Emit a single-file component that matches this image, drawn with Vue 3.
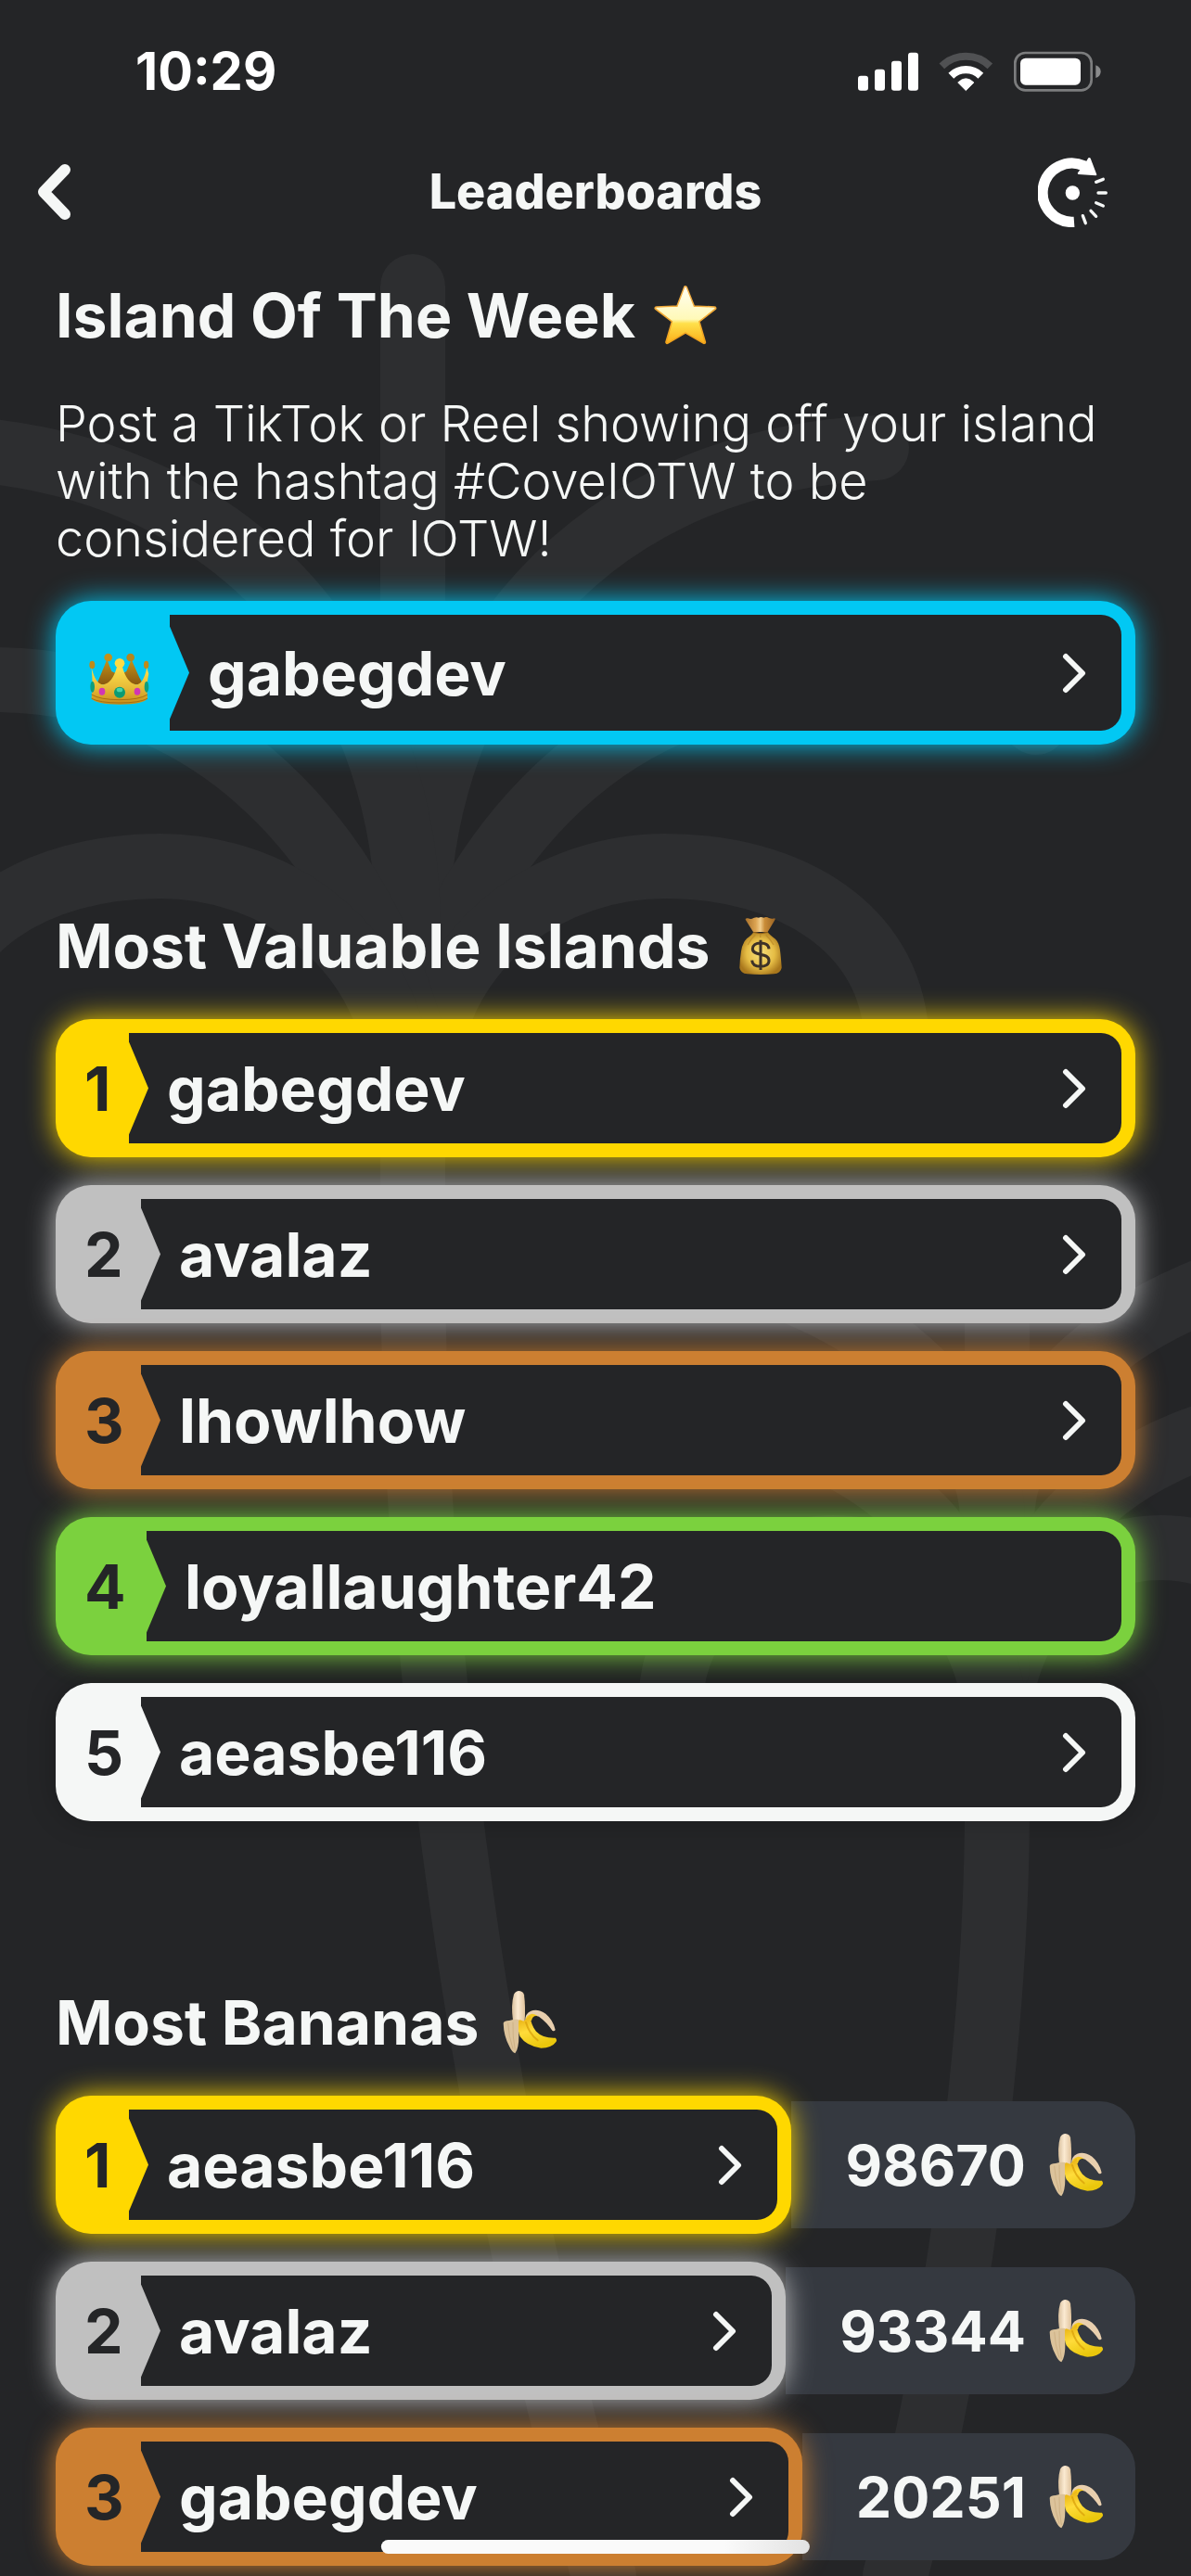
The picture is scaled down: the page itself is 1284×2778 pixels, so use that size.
<script setup>
const islandOfTheWeek = { rank: 'crown', name: 'gabegdev', tone: 'cyan', link: true }

const valuable = [
  { rank: 1, name: 'gabegdev', tone: 'gold', link: true },
  { rank: 2, name: 'avalaz', tone: 'silver', link: true },
  { rank: 3, name: 'lhowlhow', tone: 'bronze', link: true },
  { rank: 4, name: 'loyallaughter42', tone: 'green', link: false },
  { rank: 5, name: 'aeasbe116', tone: 'white', link: true },
]

const bananas = [
  { rank: 1, name: 'aeasbe116', tone: 'gold', link: true, score: 98670 },
  { rank: 2, name: 'avalaz', tone: 'silver', link: true, score: 93344 },
  { rank: 3, name: 'gabegdev', tone: 'bronze', link: true, score: 20251 },
]

const sections = [
  { id: 'iotw', title: 'Island Of The Week', icon: 'star', label: 'star', rows: [islandOfTheWeek],
    note: 'Post a TikTok or Reel showing off your island with the hashtag #CoveIOTW to be considered for IOTW!' },
  { id: 'valuable', title: 'Most Valuable Islands', icon: 'bag', label: 'money bag', rows: valuable },
  { id: 'bananas', title: 'Most Bananas', icon: 'banana', label: 'banana', rows: bananas },
]
</script>

<template>
  <div class="screen">
    <svg class="sprite" width="0" height="0" aria-hidden="true">
      <defs>
        <linearGradient id="g-star" x1="0" y1="0" x2="0" y2="1">
          <stop offset="0" stop-color="#fffdf0" /><stop offset=".58" stop-color="#fff9b8" />
          <stop offset=".66" stop-color="#ffe04a" /><stop offset="1" stop-color="#fbb21c" />
        </linearGradient>
        <linearGradient id="g-star-edge" x1="0" y1="0" x2="0" y2="1">
          <stop offset="0" stop-color="#f3b04a" /><stop offset="1" stop-color="#f0a21c" />
        </linearGradient>
        <radialGradient id="g-bag" cx=".5" cy=".5" r=".55">
          <stop offset="0" stop-color="#f6df7a" /><stop offset=".6" stop-color="#e6bd45" /><stop offset="1" stop-color="#a9771c" />
        </radialGradient>
        <linearGradient id="g-neck" x1="0" y1="0" x2="1" y2="0">
          <stop offset="0" stop-color="#a8702a" /><stop offset=".35" stop-color="#dca452" />
          <stop offset=".5" stop-color="#f1cd8c" /><stop offset=".65" stop-color="#c98c38" /><stop offset="1" stop-color="#9a6424" />
        </linearGradient>
        <linearGradient id="g-crown" x1="0" y1="0" x2="0" y2="1">
          <stop offset="0" stop-color="#fde24c" /><stop offset=".55" stop-color="#e7bb38" /><stop offset="1" stop-color="#c68d18" />
        </linearGradient>
        <linearGradient id="g-crown-back" x1="0" y1="0" x2="0" y2="1">
          <stop offset="0" stop-color="#c4921a" /><stop offset="1" stop-color="#8a5a10" />
        </linearGradient>
        <linearGradient id="g-flesh" x1="0" y1="0" x2="1" y2="0">
          <stop offset="0" stop-color="#d8bf9c" /><stop offset=".45" stop-color="#fbead2" /><stop offset="1" stop-color="#e0c39c" />
        </linearGradient>
        <linearGradient id="g-peel" x1="0" y1="0" x2=".4" y2="1">
          <stop offset="0" stop-color="#e3a80c" /><stop offset=".5" stop-color="#ffdc3a" /><stop offset="1" stop-color="#eac70c" />
        </linearGradient>
      </defs>

      <symbol id="star" viewBox="0 0 228 228">
        <g transform="translate(-56 -33)" stroke-linejoin="round">
          <path d="M170 58 195 121 264 124 210 166 230 234 170 199 111 234 131 166 76 124 146 121Z" fill="url(#g-star)" stroke="url(#g-star-edge)" stroke-width="13" />
          <path d="M170 58 195 121 263 124 210 166 229 233 170 199 112 233 131 166 77 124 146 121Z" fill="url(#g-star)" stroke="url(#g-star)" stroke-width="4" />
        </g>
      </symbol>

      <symbol id="bag" viewBox="0 0 228 228">
        <g transform="translate(-33 -63)">
          <path d="M123 132 98 92Q97 86 106 88 117 92 124 87 133 83 141 86 148 82 157 86 166 82 174 87 184 91 193 88 196 90 192 95L170 132Z" fill="url(#g-neck)" />
          <path d="M124 132Q147 139 170 132 176 142 195 155 208 167 211 200 215 240 215 248 212 265 190 268 147 272 104 268 82 265 79 248 80 220 84 195 88 168 102 154 119 142 124 132Z" fill="url(#g-bag)" />
          <path d="M123 133Q147 142 171 133" fill="none" stroke="#8b5a16" stroke-width="3" />
          <path d="M130 142Q114 156 106 174M146 142V150M164 142Q179 156 189 174" fill="none" stroke="#b98423" stroke-width="4" opacity=".65" />
          <path d="M174 187C173 174 162 168 147 168 131 168 121 176 121 187 121 212 174 197 174 225 174 238 162 244 147 244 131 244 120 237 119 224M147 158V255" fill="none" stroke="#3d3228" stroke-width="9" />
        </g>
      </symbol>

      <symbol id="crown" viewBox="0 0 228 228">
        <g transform="translate(-90 -142)">
          <path d="M163 212 139 270 130 292 280 292 268 270 242 212 226 250 204 262 178 250Z" fill="url(#g-crown-back)" />
          <circle cx="167" cy="205" r="13" fill="#c4901a" /><circle cx="239" cy="205" r="13" fill="#b5861f" />
          <ellipse cx="115" cy="229" rx="9" ry="13" fill="#c08a18" /><ellipse cx="290" cy="229" rx="8" ry="13" fill="#c08a18" />
          <path d="M113 238Q126 292 151 293 181 288 195 236H213Q227 288 257 293 281 292 292 238L298 258Q290 290 294 338 282 357 204 357 126 357 113 338 118 290 113 238Z" fill="url(#g-crown)" />
          <circle cx="204" cy="224" r="16" fill="#fbdc47" />
          <path d="M113 325Q140 342 204 342 268 342 294 325M113 338Q140 352 204 352 268 352 294 338" fill="none" stroke="#a66f12" stroke-width="3" />
          <ellipse cx="116" cy="300" rx="7" ry="18" fill="#109e7c" /><ellipse cx="291" cy="300" rx="7" ry="18" fill="#109e7c" />
          <circle cx="204" cy="318" r="18" fill="#0a9b73" /><ellipse cx="204" cy="310" rx="10" ry="7" fill="#46d3a8" />
          <ellipse cx="147" cy="315" rx="10" ry="12" fill="#d136b4" /><ellipse cx="261" cy="315" rx="10" ry="12" fill="#d136b4" />
        </g>
      </symbol>

      <symbol id="banana" viewBox="0 0 228 228">
        <g transform="translate(-64 -82)">
          <path d="M124 190Q117 140 127 105 133 94 144 94 157 95 160 107 165 145 162 192L146 200Z" fill="url(#g-flesh)" />
          <path d="M164 190Q162 168 182 159 205 151 230 168 254 188 261 220 258 226 251 222 234 196 208 177 190 170 184 180Z" fill="#e9cfae" />
          <path d="M164 190Q166 172 186 168 196 168 205 176 188 172 184 190Z" fill="#f6c91d" />
          <path d="M142 190Q146 184 158 192L180 174Q182 204 199 225 221 248 262 246 267 252 264 258 250 278 215 279 168 273 147 242 138 222 142 190Z" fill="url(#g-peel)" />
          <path d="M166 196Q176 232 204 254" fill="none" stroke="#d79c08" stroke-width="6" stroke-linecap="round" opacity=".7" />
          <path d="M93 198Q96 190 112 190 130 185 143 187 141 204 143 240 143 280 131 296 122 294 113 275 94 240 93 198Z" fill="#dcc39b" />
          <path d="M108 198Q110 240 124 282M124 195Q122 240 131 286" fill="none" stroke="#bb9b6b" stroke-width="2" opacity=".7" />
        </g>
      </symbol>

      <symbol id="chevron" viewBox="0 0 26 44">
        <path d="M4 4 22 22 4 40" fill="none" stroke="#f5f7f6" stroke-width="6" stroke-linecap="round" stroke-linejoin="round" />
      </symbol>
    </svg>

    <svg class="palms" viewBox="0 0 1284 2778" preserveAspectRatio="xMidYMin slice" aria-hidden="true">
      <defs>
        <g id="fronds">
          <path d="M450 1000C450 760 600 500 945 483" />
          <path d="M445 1120C490 950 630 733 900 733 990 733 1070 740 1117 779" />
          <path d="M458 1160C475 1010 600 934 717 934 850 934 967 1000 967 1130" />
        </g>
        <g id="fronds-small">
          <path d="M1080 1640C1080 1560 1150 1440 1330 1380" />
          <path d="M1075 1800C1085 1720 1150 1590 1320 1542" />
          <path d="M1075 1860C1085 1740 1160 1669 1252 1669 1340 1669 1427 1740 1427 1840" />
        </g>
      </defs>
      <g fill="none" stroke="#2d2e30" stroke-width="70" stroke-linecap="round">
        <path d="M445 309V1340C445 1600 465 1830 505 2100 532 2280 570 2480 651 2778" />
        <use href="#fronds" />
        <use href="#fronds" transform="translate(890 0) scale(-1 1)" />
        <path d="M1075 1340V1960C1074 2130 1050 2450 965 2778" />
        <use href="#fronds-small" />
        <use href="#fronds-small" transform="translate(2150 0) scale(-1 1)" />
      </g>
    </svg>

    <div class="content">
      <div class="status">
        <time class="clock">10:29</time>
        <svg class="status-icons" viewBox="75 70 789 132" role="img" aria-label="Signal, Wi-Fi and battery">
          <g fill="#fff">
            <rect x="75" y="150" width="33" height="48" rx="9" />
            <rect x="129" y="129" width="33" height="69" rx="9" />
            <rect x="183" y="102" width="33" height="96" rx="9" />
            <rect x="237" y="75" width="33" height="123" rx="9" />
            <path d="M424 198 398 172Q424 146 450 172Z" stroke="#fff" stroke-width="2" stroke-linejoin="round" />
            <rect x="600" y="93" width="195" height="87" rx="17" />
          </g>
          <path d="M346 119A112 112 0 0 1 502 119" fill="none" stroke="#505153" stroke-width="24" />
          <path d="M376 150A69 69 0 0 1 472 150" fill="none" stroke="#fff" stroke-width="25" />
          <rect x="583" y="76" width="247" height="121" rx="33" fill="none" stroke="#7c7d7e" stroke-width="8" />
          <path d="M844 116Q860 122 860 136.500 860 151 844 157Z" fill="#8a8b8c" />
        </svg>
      </div>

      <header class="nav">
        <button class="back" type="button" aria-label="Back">
          <svg width="38" height="62" viewBox="0 0 38 62"><path d="M31 7 8 31 31 55" fill="none" stroke="#f5f7f6" stroke-width="12" stroke-linecap="round" stroke-linejoin="round" /></svg>
        </button>
        <h1>Leaderboards</h1>
        <button class="refresh" type="button" aria-label="Refresh">
          <svg width="75" height="75" viewBox="0 0 225 225">
            <path d="M117 208A95 95 0 1 1 150 27" fill="none" stroke="#fff" stroke-width="34" />
            <path d="M150 14 157 11 163 1Q167-1 170 2L190 55Q190 58 187 58L131 54Q127 52 129 49L136 40Z" fill="#fff" />
            <circle cx="112" cy="114" r="23" fill="#fff" />
            <path d="M188 79 211 70M195 114H220M188 146 211 156M171 172 188 190M145 188 154 212" stroke="#f5f7f6" stroke-width="10" stroke-linecap="round" />
          </svg>
        </button>
      </header>

      <main>
        <section v-for="section in sections" :key="section.id" :aria-labelledby="section.id">
          <h2 :id="section.id">
            {{ section.title }}
            <svg class="emoji" role="img" :aria-label="section.label"><use :href="'#' + section.icon" /></svg>
          </h2>
          <p v-if="section.note">{{ section.note }}</p>
          <ol>
            <li v-for="row in section.rows" :key="row.rank" :class="row.tone">
              <component :is="row.link ? 'a' : 'div'" class="card" :href="row.link ? '#' : null">
                <span class="rank">
                  <svg v-if="row.rank === 'crown'" class="emoji" role="img" aria-label="crown"><use href="#crown" /></svg>
                  <template v-else>{{ row.rank }}</template>
                </span>
                <span class="body">
                  <span class="name">{{ row.name }}</span>
                  <svg v-if="row.link" class="chevron" aria-hidden="true"><use href="#chevron" /></svg>
                </span>
              </component>
              <span v-if="row.score" class="score">
                {{ row.score }}
                <svg class="emoji" role="img" aria-label="bananas"><use href="#banana" /></svg>
              </span>
            </li>
          </ol>
        </section>
      </main>
    </div>
    <div class="home-indicator"></div>
  </div>
</template>

<style>
body {
  background: #242527;
}
</style>

<style scoped>
.screen {
  position: relative;
  min-height: 100vh;
  overflow: hidden;
  background: #242527;
  color: #f5f7f6;
  font-family: Inter, "Liberation Sans", sans-serif;
}
.sprite {
  position: absolute;
}
.palms {
  position: absolute;
  inset: 0;
  width: 100%;
  height: 100%;
}
.content {
  position: relative;
}
.status {
  display: flex;
  align-items: center;
  justify-content: space-between;
  height: 154px;
  padding: 0 96px 0 146px;
}
.clock {
  font-size: 56px;
  font-weight: 700;
  color: #fff;
}
.status-icons {
  width: 263px;
  height: 44px;
}
.nav {
  display: grid;
  grid-template-columns: 1fr auto 1fr;
  align-items: center;
  height: 106px;
  padding: 0 90px 0 39px;
}
.nav h1 {
  margin: 0 0 0 51px;
  font-size: 52px;
  line-height: 62px;
  font-weight: 800;
}
button {
  display: flex;
  padding: 0;
  border: 0;
  background: none;
}
.refresh {
  justify-self: end;
}
main {
  display: flex;
  flex-direction: column;
  gap: 177px;
  padding: 40px 60px 11px;
}
h2 {
  display: flex;
  align-items: center;
  gap: 16px;
  margin: 0 0 39px;
  font-size: 66px;
  line-height: 80px;
  font-weight: 700;
}
.emoji {
  flex: none;
  width: 76px;
  height: 76px;
}
p {
  margin: 46px 0 36px;
  padding-right: 20px;
  font-size: 54px;
  line-height: 62px;
  font-weight: 300;
}
ol {
  display: flex;
  flex-direction: column;
  gap: 30px;
  margin: 0;
  padding: 0;
  list-style: none;
}
li {
  display: flex;
  align-items: center;
  font-size: 66px;
  font-weight: 700;
}
.card {
  position: relative;
  flex: 1;
  display: flex;
  padding: 15px 15px 15px 0;
  border-radius: 38px;
  background: var(--tone);
  box-shadow: 0 0 30px var(--glow, var(--tone));
  color: inherit;
  text-decoration: none;
}
.rank {
  flex: none;
  display: flex;
  align-items: center;
  box-sizing: border-box;
  width: var(--rank);
  padding-left: 31px;
  color: #242527;
}
.body {
  flex: 1;
  display: flex;
  align-items: center;
  height: 119px;
  padding-right: 38px;
  border-radius: 0 22px 22px 0;
  background: #242527;
}
.body::before {
  content: "";
  width: 21px;
  height: 100px;
  background: var(--tone);
  clip-path: polygon(0 0, 100% 50%, 0 100%);
}
.name {
  flex: 1;
  padding-left: 20px;
}
.chevron {
  width: 26px;
  height: 44px;
}
.score {
  display: flex;
  align-items: center;
  gap: 16px;
  height: 137px;
  padding: 0 26px 0 58px;
  border-radius: 0 38px 38px 0;
  background: #353940;
  font-size: 61px;
}
.cyan { --tone: #02c8f3; --rank: 123px; }
.cyan .body { height: 125px; }
.gold { --tone: #ffd800; --rank: 79px; }
.silver { --tone: #c0c0c0; --rank: 92px; }
.bronze { --tone: #cc7f31; --rank: 92px; }
.green { --tone: #7bd13e; --rank: 98px; }
.white { --tone: #f5f7f6; --rank: 92px; --glow: rgba(0, 0, 0, 0.25); }
.home-indicator {
  position: absolute;
  bottom: 24px;
  left: 50%;
  width: 36%;
  height: 15px;
  transform: translateX(-50%);
  border-radius: 8px;
  background: linear-gradient(90deg, #fafafa 80%, #e2e2e2);
}
</style>
